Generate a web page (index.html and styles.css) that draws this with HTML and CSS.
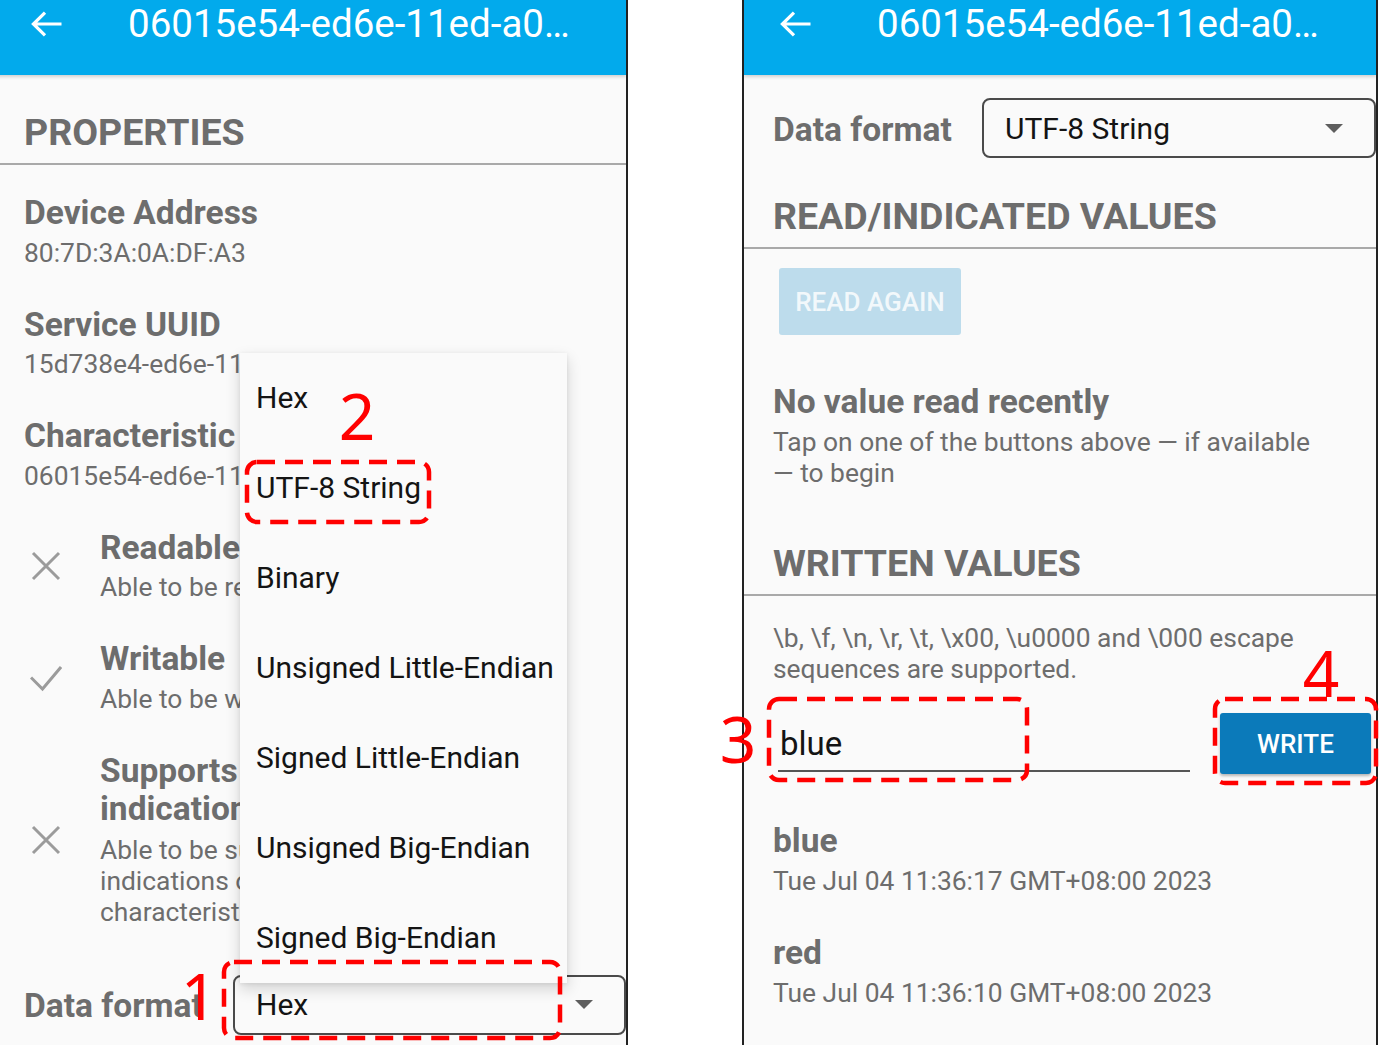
FILE: index.html
```html
<!DOCTYPE html>
<html lang="en">
<head>
<meta charset="utf-8">
<title>BLE characteristic</title>
<link rel="stylesheet" href="styles.css">
</head>
<body>
<div class="page">

  <section class="phone phone-left">
    <header class="appbar">
      <svg class="back" viewBox="0 0 31 26" aria-hidden="true"><path d="M14 1.6 L2.4 13 L14 24.4 M2.4 13 H30.5"/></svg>
      <h1 class="title">06015e54-ed6e-11ed-a0…</h1>
    </header>

    <h2 class="section">PROPERTIES</h2>
    <div class="props">
      <div class="item">
        <div class="label">Device Address</div>
        <div class="value">80:7D:3A:0A:DF:A3</div>
      </div>
      <div class="item">
        <div class="label">Service UUID</div>
        <div class="value">15d738e4-ed6e-11ed-a056-0242ac12</div>
      </div>
      <div class="item">
        <div class="label">Characteristic</div>
        <div class="value">06015e54-ed6e-11ed-a056-0242ac12</div>
      </div>
      <div class="item icon-item">
        <svg class="ico" viewBox="0 0 32 32" aria-hidden="true"><path d="M3 3 L29 29 M29 3 L3 29"/></svg>
        <div class="text">
          <div class="label">Readable</div>
          <div class="value">Able to be read</div>
        </div>
      </div>
      <div class="item icon-item">
        <svg class="ico" viewBox="0 0 32 32" aria-hidden="true"><path d="M1 15.5 L12.5 27 L31 5"/></svg>
        <div class="text">
          <div class="label">Writable</div>
          <div class="value">Able to be written</div>
        </div>
      </div>
      <div class="item icon-item">
        <svg class="ico" viewBox="0 0 32 32" aria-hidden="true"><path d="M3 3 L29 29 M29 3 L3 29"/></svg>
        <div class="text">
          <div class="label">Supports notifications/ indications</div>
          <div class="value value-long">Able to be subscribed for notifications/ indications of changes to this characteristic</div>
        </div>
      </div>
    </div>

    <div class="format-row format-bottom">
      <div class="format-label">Data format</div>
      <div class="select">Hex<span class="caret"></span></div>
    </div>

    <ul class="menu">
      <li>Hex</li>
      <li>UTF-8 String</li>
      <li>Binary</li>
      <li>Unsigned Little-Endian</li>
      <li>Signed Little-Endian</li>
      <li>Unsigned Big-Endian</li>
      <li>Signed Big-Endian</li>
    </ul>
  </section>

  <div class="gap"></div>

  <section class="phone phone-right">
    <header class="appbar">
      <svg class="back" viewBox="0 0 31 26" aria-hidden="true"><path d="M14 1.6 L2.4 13 L14 24.4 M2.4 13 H30.5"/></svg>
      <h1 class="title">06015e54-ed6e-11ed-a0…</h1>
    </header>

    <div class="format-row format-top">
      <div class="format-label">Data format</div>
      <div class="select">UTF-8 String<span class="caret"></span></div>
    </div>

    <h2 class="section section-read">READ/INDICATED VALUES</h2>
    <div class="block">
      <div class="btn btn-disabled">READ AGAIN</div>
      <div class="entry entry-empty">
        <div class="label">No value read recently</div>
        <div class="value">Tap on one of the buttons above — if available — to begin</div>
      </div>
    </div>

    <h2 class="section section-written">WRITTEN VALUES</h2>
    <div class="block">
      <p class="hint">\b, \f, \n, \r, \t, \x00, \u0000 and \000 escape sequences are supported.</p>
      <div class="write-row">
        <div class="input">blue</div>
        <div class="btn btn-write">WRITE</div>
      </div>
      <div class="entry entry-first">
        <div class="label">blue</div>
        <div class="value">Tue Jul 04 11:36:17 GMT+08:00 2023</div>
      </div>
      <div class="entry">
        <div class="label">red</div>
        <div class="value">Tue Jul 04 11:36:10 GMT+08:00 2023</div>
      </div>
    </div>
  </section>

  <svg class="annot" viewBox="0 0 1384 1045" aria-hidden="true">
    <rect class="dash" x="247" y="462" width="182" height="60" rx="10"/>
    <rect class="dash" x="224" y="962" width="336" height="76" rx="10"/>
    <rect class="dash" x="769" y="699" width="258" height="81" rx="10"/>
    <rect class="dash" x="1215" y="699" width="161" height="84" rx="10"/>
    <text class="num" x="357" y="440">2</text>
    <text class="num" x="199" y="1020">1</text>
    <text class="num" x="738" y="763">3</text>
    <text class="num" x="1321" y="697">4</text>
  </svg>

</div>
</body>
</html>
```

FILE: styles.css
```css
* {
  box-sizing: border-box;
  margin: 0;
  padding: 0;
}

html,
body {
  width: 1384px;
  height: 1045px;
  overflow: hidden;
  background: #ffffff;
}

body {
  font-family: Roboto, "Noto Sans", sans-serif;
  color: #6d6d6d;
}

.page {
  position: relative;
  display: flex;
  width: 1384px;
  height: 1045px;
}

/* phone panels */
.phone {
  position: relative;
  flex: none;
  height: 1045px;
  background: #fafafa;
  overflow: hidden;
}

.phone-left {
  width: 633px;
  margin-left: -5px;
  border-right: 2px solid #222222;
}

.gap {
  flex: none;
  width: 114px;
}

.phone-right {
  width: 636px;
  border-left: 2px solid #222222;
  border-right: 2px solid #222222;
}

/* app bar */
.appbar {
  position: relative;
  z-index: 1;
  display: flex;
  align-items: flex-start;
  height: 75px;
  background: #02aaec;
  box-shadow: 0 2px 3px rgba(0, 0, 0, 0.16);
}

.back {
  flex: none;
  width: 31px;
  height: 26px;
  margin: 11px 0 0 36px;
}

.back path {
  fill: none;
  stroke: #ffffff;
  stroke-width: 3.2;
}

.title {
  margin-left: 66px;
  font-size: 38.5px;
  font-weight: 400;
  line-height: 48px;
  color: #ffffff;
  white-space: nowrap;
}

/* section headers */
.section {
  margin-top: 35px;
  padding: 0 0 9px 29px;
  font-size: 37.5px;
  font-weight: 700;
  line-height: 44px;
  color: #6d6d6d;
  border-bottom: 2px solid #a9a9a9;
}

.section-read {
  margin-top: 36px;
}

.section-written {
  margin-top: 52px;
}

/* generic label/value */
.label {
  font-size: 33.5px;
  font-weight: 700;
  line-height: 38px;
}

.value {
  margin-top: 5.5px;
  font-size: 26.4px;
  font-weight: 400;
  line-height: 31px;
}

.value-long {
  margin-top: 7px;
}

/* properties list */
.props {
  padding: 29px 26px 0 29px;
}

.item {
  margin-bottom: 37.1px;
}

.icon-item {
  display: flex;
  align-items: center;
}

.ico {
  flex: none;
  width: 32px;
  height: 32px;
  margin-left: 6px;
}

.ico path {
  fill: none;
  stroke: #9b9b9b;
  stroke-width: 3;
}

.icon-item .text {
  flex: 1;
  margin-left: 38px;
}

/* data format row */
.format-row {
  display: flex;
  align-items: center;
  height: 60px;
}

.format-bottom {
  margin-top: 47px;
}

.format-top {
  margin-top: 23px;
}

.format-label {
  flex: none;
  width: 238px;
  padding: 3px 0 0 29px;
  font-size: 33.5px;
  font-weight: 700;
  line-height: 38px;
  white-space: nowrap;
}

.select {
  flex: 1;
  display: flex;
  align-items: center;
  height: 60px;
  padding: 0 31px 0 21px;
  border: 2px solid #4a4a4a;
  border-radius: 8px;
  font-size: 30px;
  color: #141414;
  background: #fafafa;
}

.caret {
  margin-left: auto;
  width: 0;
  height: 0;
  border-left: 9px solid transparent;
  border-right: 9px solid transparent;
  border-top: 9px solid #5e5e5e;
}

/* dropdown popup menu */
.menu {
  position: absolute;
  z-index: 2;
  left: 245px;
  top: 353px;
  width: 327px;
  list-style: none;
  background: #fafafa;
  box-shadow: 0 6px 14px rgba(0, 0, 0, 0.16), 0 1px 4px rgba(0, 0, 0, 0.08);
}

.menu li {
  height: 90px;
  padding-left: 16px;
  font-size: 30px;
  line-height: 90px;
  color: #141414;
  white-space: nowrap;
}

/* right panel blocks */
.block {
  padding: 0 48px 0 29px;
}

.btn {
  display: flex;
  align-items: center;
  justify-content: center;
  font-size: 26px;
  font-weight: 500;
  border-radius: 3px;
}

.btn-disabled {
  width: 182px;
  height: 67px;
  margin: 19px 0 0 6px;
  background: #bddcec;
  color: #f2f8fb;
}

.entry {
  margin-top: 37.5px;
}

.entry-empty {
  margin-top: 48px;
}

.entry-first {
  margin-top: 48px;
}

.hint {
  margin-top: 27px;
  font-size: 26.4px;
  line-height: 31px;
}

.write-row {
  display: flex;
  align-items: flex-start;
  margin: 28.5px -42px 0 5px;
}

.input {
  flex: none;
  width: 412px;
  height: 59px;
  padding: 10px 0 0 2px;
  font-size: 33px;
  line-height: 42px;
  color: #141414;
  border-bottom: 2px solid #555555;
}

.btn-write {
  flex: none;
  width: 151px;
  height: 61px;
  margin-left: 30px;
  background: #0b7aba;
  color: #ffffff;
  box-shadow: 0 2px 3px rgba(0, 0, 0, 0.28);
}

/* red annotations overlay */
.annot {
  position: absolute;
  left: 0;
  top: 0;
  z-index: 5;
  width: 1384px;
  height: 1045px;
  pointer-events: none;
}

.dash {
  fill: none;
  stroke: #ff0000;
  stroke-width: 4.5;
  stroke-dasharray: 18 10;
}

.num {
  font-family: "Noto Sans", "DejaVu Sans", sans-serif;
  font-size: 64px;
  font-weight: 400;
  fill: #ff0000;
  text-anchor: middle;
}
```
